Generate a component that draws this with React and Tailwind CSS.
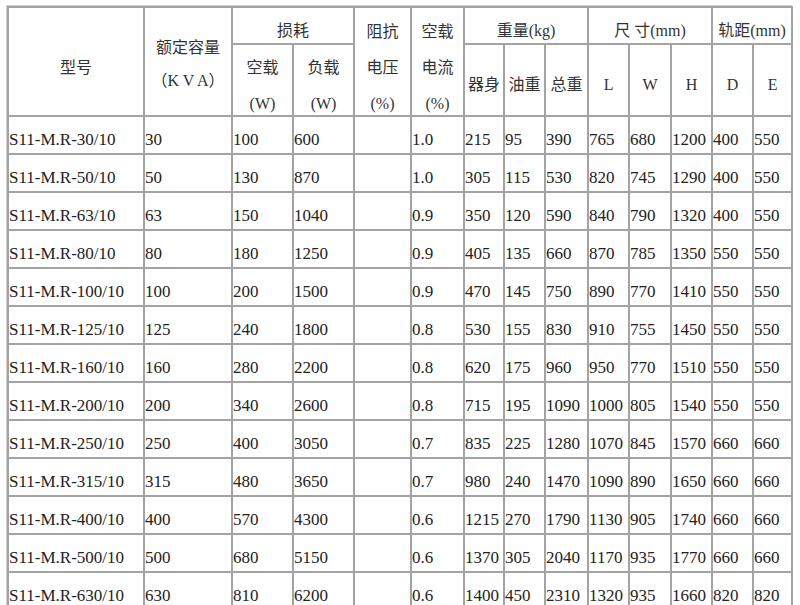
const rows = [
    ["S11-M.R-30/10", "30", "100", "600", "", "1.0", "215", "95", "390", "765", "680", "1200", "400", "550"],
    ["S11-M.R-50/10", "50", "130", "870", "", "1.0", "305", "115", "530", "820", "745", "1290", "400", "550"],
    ["S11-M.R-63/10", "63", "150", "1040", "", "0.9", "350", "120", "590", "840", "790", "1320", "400", "550"],
    ["S11-M.R-80/10", "80", "180", "1250", "", "0.9", "405", "135", "660", "870", "785", "1350", "550", "550"],
    ["S11-M.R-100/10", "100", "200", "1500", "", "0.9", "470", "145", "750", "890", "770", "1410", "550", "550"],
    ["S11-M.R-125/10", "125", "240", "1800", "", "0.8", "530", "155", "830", "910", "755", "1450", "550", "550"],
    ["S11-M.R-160/10", "160", "280", "2200", "", "0.8", "620", "175", "960", "950", "770", "1510", "550", "550"],
    ["S11-M.R-200/10", "200", "340", "2600", "", "0.8", "715", "195", "1090", "1000", "805", "1540", "550", "550"],
    ["S11-M.R-250/10", "250", "400", "3050", "", "0.7", "835", "225", "1280", "1070", "845", "1570", "660", "660"],
    ["S11-M.R-315/10", "315", "480", "3650", "", "0.7", "980", "240", "1470", "1090", "890", "1650", "660", "660"],
    ["S11-M.R-400/10", "400", "570", "4300", "", "0.6", "1215", "270", "1790", "1130", "905", "1740", "660", "660"],
    ["S11-M.R-500/10", "500", "680", "5150", "", "0.6", "1370", "305", "2040", "1170", "935", "1770", "660", "660"],
    ["S11-M.R-630/10", "630", "810", "6200", "", "0.6", "1400", "450", "2310", "1320", "935", "1660", "820", "820"],
];

const th = "border-2 border-[#a3a3a3] font-normal text-center p-0";
const td = "border-2 border-[#a3a3a3] text-left align-middle p-0 whitespace-nowrap leading-[22px]";

// header cell with stacked lines, fixed box so the row keeps its height
const Stack = ({ lines, mt, h, lh = "leading-[36px]" }) => (
    <div className={`${mt} ${h} ${lh} overflow-visible`}>
        {lines.map((l) => (
            <div key={l}>{l}</div>
        ))}
    </div>
);

const App = () => {
    return (
        <div
            className="w-[800px] h-[605px] overflow-hidden bg-white text-[#222] pl-[6px] pt-[5px]"
            style={{ fontFamily: '"Liberation Serif", "Noto Sans CJK SC", serif' }}
        >
            <div className="w-[786px] border border-[#cfcfcf]">
                <table className="table-fixed border-collapse w-[784px] text-[16px]">
                    <colgroup>
                        <col className="w-[136px]" />
                        <col className="w-[88px]" />
                        <col className="w-[61px]" />
                        <col className="w-[61px]" />
                        <col className="w-[57px]" />
                        <col className="w-[53px]" />
                        <col className="w-[40px]" />
                        <col className="w-[41px]" />
                        <col className="w-[43px]" />
                        <col className="w-[41px]" />
                        <col className="w-[42px]" />
                        <col className="w-[41px]" />
                        <col className="w-[41px]" />
                        <col className="w-[39px]" />
                    </colgroup>
                    <thead className="text-[#333]">
                        <tr className="h-[37px]">
                            <th rowSpan={2} className={`${th} align-middle`}>
                                <span className="relative top-[6px]">型号</span>
                            </th>
                            <th rowSpan={2} className={`${th} align-top`}>
                                <Stack
                                    lines={["额定容量", "（K V A）"]}
                                    mt="mt-[23px]"
                                    h="h-[70px]"
                                    lh="leading-[33px]"
                                />
                            </th>
                            <th colSpan={2} className={`${th} align-middle`}>
                                <span className="relative top-[5px]">损耗</span>
                            </th>
                            <th rowSpan={2} className={`${th} align-top`}>
                                <Stack lines={["阻抗", "电压", "(%)"]} mt="mt-[6px]" h="h-[96px]" />
                            </th>
                            <th rowSpan={2} className={`${th} align-top`}>
                                <Stack lines={["空载", "电流", "(%)"]} mt="mt-[6px]" h="h-[96px]" />
                            </th>
                            <th colSpan={3} className={`${th} align-middle`}>
                                <span className="relative top-[5px]">重量(kg)</span>
                            </th>
                            <th colSpan={3} className={`${th} align-middle`}>
                                <span className="relative top-[5px]">尺 寸(mm)</span>
                            </th>
                            <th colSpan={2} className={`${th} align-middle`}>
                                <span className="relative top-[5px]">轨距(mm)</span>
                            </th>
                        </tr>
                        <tr className="h-[72px]">
                            <th className={`${th} align-top`}>
                                <Stack lines={["空载", "(W)"]} mt="mt-[5px]" h="h-[64px]" />
                            </th>
                            <th className={`${th} align-top`}>
                                <Stack lines={["负载", "(W)"]} mt="mt-[5px]" h="h-[64px]" />
                            </th>
                            {["器身", "油重", "总重", "L", "W", "H", "D", "E"].map((h) => (
                                <th key={h} className={`${th} align-middle`}>
                                    <span className="relative top-[5px]">{h}</span>
                                </th>
                            ))}
                        </tr>
                    </thead>
                    <tbody className="text-[17px]">
                        {rows.map((row) => (
                            <tr key={row[0]} className="h-[38px]">
                                {row.map((cell, i) => (
                                    <td key={i} className={td}>
                                        <span className="relative top-[5px]">{cell}</span>
                                    </td>
                                ))}
                            </tr>
                        ))}
                    </tbody>
                </table>
            </div>
        </div>
    );
};

export default App;
